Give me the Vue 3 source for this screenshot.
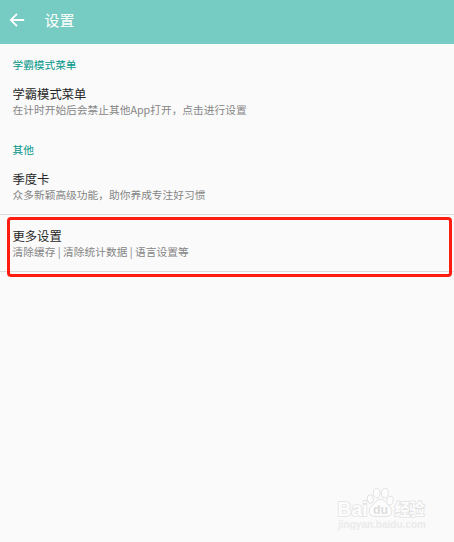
<template>
  <div class="page">
    <header class="toolbar">
      <svg class="back" viewBox="0 0 16 14" width="16" height="14">
        <path d="M8 0.9 L1.8 7 L8 13.1 M2 7 H15.2" />
      </svg>
      <h1>设置</h1>
    </header>

    <section v-for="group in groups" :key="group.name" class="group">
      <h2>{{ group.name }}</h2>
      <div class="item">
        <div class="title">{{ group.title }}</div>
        <div class="summary">{{ group.summary }}</div>
      </div>
    </section>

    <div class="item more">
      <div class="title">更多设置</div>
      <div class="summary">清除缓存 | 清除统计数据 | 语言设置等</div>
      <div class="highlight"></div>
    </div>

    <svg class="watermark" viewBox="0 0 102 50" width="102" height="50">
      <g class="paw">
        <ellipse cx="44.3" cy="12" rx="2.9" ry="4.2" transform="rotate(-12 44.3 12)" />
        <ellipse cx="50.7" cy="6" rx="3.4" ry="4.8" />
        <ellipse cx="58.9" cy="6" rx="3.4" ry="4.8" transform="rotate(8 58.9 6)" />
        <ellipse cx="64" cy="13.6" rx="3.1" ry="4.4" transform="rotate(14 64 13.6)" />
        <path d="M54.5 12.3 C50.5 12.3 49 16 46 18.8 C41.5 22.5 42.5 29.3 48.5 29.3 H60.5 C66.5 29.3 67.5 22.5 63 18.8 C60 16 58.5 12.3 54.5 12.3 Z" />
      </g>
      <text class="latin" x="11.5" y="28.5" textLength="30" lengthAdjust="spacingAndGlyphs">Bai</text>
      <text class="du" x="47" y="27" textLength="15" lengthAdjust="spacingAndGlyphs">du</text>
      <text class="cjk" x="68.5" y="28" textLength="30">经验</text>
      <text class="url" x="12" y="40.5" textLength="88" lengthAdjust="spacingAndGlyphs">jingyan.baidu.com</text>
    </svg>
  </div>
</template>

<script setup>
const groups = [
  {
    name: '学霸模式菜单',
    title: '学霸模式菜单',
    summary: '在计时开始后会禁止其他App打开，点击进行设置'
  },
  {
    name: '其他',
    title: '季度卡',
    summary: '众多新颖高级功能，助你养成专注好习惯'
  }
]
</script>

<style>
body {
  background: #fafafa;
}
</style>

<style scoped>
.page {
  position: relative;
  height: 542px;
  overflow: hidden;
  background: #fafafa;
  font-family: "Noto Sans CJK SC", sans-serif;
}

.toolbar {
  display: flex;
  align-items: center;
  gap: 19.5px;
  box-sizing: border-box;
  height: 44px;
  padding: 0 9px 4px;
  background: #76cbc2;
  color: #fff;
}

.back {
  fill: none;
  stroke: #fff;
  stroke-width: 1.8;
}

h1 {
  margin: 0;
  font-size: 15px;
  font-weight: 400;
  line-height: 20px;
}

.group {
  height: 85px;
  padding: 0 12.5px;
}

h2 {
  margin: 0;
  padding: 13px 0 12px;
  font-size: 10.67px;
  font-weight: 400;
  line-height: 16px;
  color: #009688;
}

.title {
  font-size: 12.3px;
  line-height: 17px;
  color: #262626;
}

.summary {
  font-size: 10.73px;
  line-height: 16px;
  color: #858585;
  white-space: nowrap;
}

.group .title {
  padding-top: 1px;
  line-height: 16px;
}

.more {
  position: relative;
  box-sizing: border-box;
  height: 58px;
  padding: 13px 12.5px 0;
  border-top: 1px solid #dcdcdc;
  border-bottom: 1px solid #dcdcdc;
}

.more .summary {
  margin-top: -1px;
}

.highlight {
  position: absolute;
  top: 2px;
  left: 7px;
  right: 2px;
  box-sizing: border-box;
  height: 60px;
  border: 3px solid #ff1d12;
  border-radius: 4px;
}

.watermark {
  position: absolute;
  left: 326px;
  top: 487px;
  overflow: visible;
  fill: #fdfdfd;
  stroke: #e2e2e2;
  stroke-width: 1;
}

.watermark text {
  paint-order: stroke;
  stroke-width: 1.6;
  font-family: "Liberation Sans", "Noto Sans CJK SC", sans-serif;
  font-weight: 700;
}

.watermark .latin {
  font-size: 20px;
}

.watermark .du {
  font-size: 13px;
  fill: #dedede;
  stroke: none;
}

.watermark .cjk {
  font-size: 15.5px;
}

.watermark .url {
  font-size: 11px;
  fill: #ebebeb;
  stroke: none;
}
</style>
